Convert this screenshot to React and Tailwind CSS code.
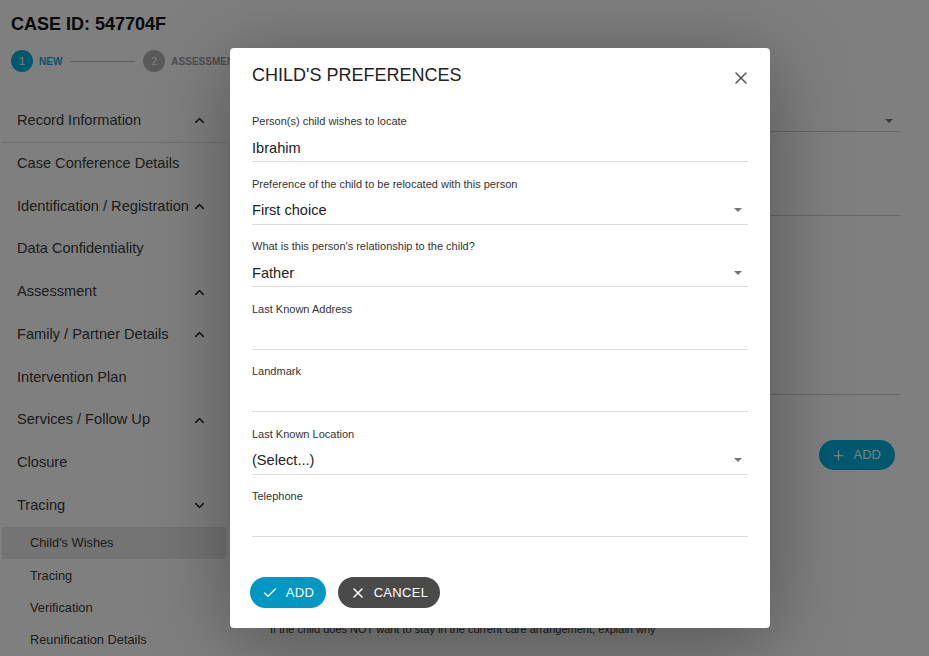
import React from 'react';
import { Check, X, ChevronUp, ChevronDown, Plus } from 'lucide-react';

const sections = [
  { label: 'Record Information', chevron: 'up', divider: true },
  { label: 'Case Conference Details' },
  { label: 'Identification / Registration', chevron: 'up' },
  { label: 'Data Confidentiality' },
  { label: 'Assessment', chevron: 'up' },
  { label: 'Family / Partner Details', chevron: 'up' },
  { label: 'Intervention Plan' },
  { label: 'Services / Follow Up', chevron: 'up' },
  { label: 'Closure' },
  { label: 'Tracing', chevron: 'down' },
];

const subItems = ["Child's Wishes", 'Tracing', 'Verification', 'Reunification Details'];

const fields = [
  { label: 'Person(s) child wishes to locate', value: 'Ibrahim' },
  { label: 'Preference of the child to be relocated with this person', value: 'First choice', select: true },
  { label: "What is this person's relationship to the child?", value: 'Father', select: true },
  { label: 'Last Known Address' },
  { label: 'Landmark' },
  { label: 'Last Known Location', value: '(Select...)', select: true },
  { label: 'Telephone' },
];

const Caret = () => (
  <span className="block h-0 w-0 border-x-[4.5px] border-t-[4.5px] border-x-transparent border-t-[#757575]" />
);

const Step = ({ n, label, active }) => (
  <div className="flex items-center gap-[6px]">
    <span
      className={`flex h-[22px] w-[22px] items-center justify-center rounded-full text-[11px] text-white ${
        active ? 'bg-[#00b0de]' : 'bg-[#b4b4b4]'
      }`}
    >
      {n}
    </span>
    <span className={`text-[10px] font-bold ${active ? 'text-[#00b0de]' : 'text-[#9a9a9a]'}`}>{label}</span>
  </div>
);

const Sidebar = () => (
  <nav className="w-[226px] shrink-0 pl-[2px] pt-[7px]">
    {sections.map((s) => (
      <div
        key={s.label}
        className={`flex h-[42.7px] items-center justify-between whitespace-nowrap pl-[15px] pr-[19px] text-[14.6px] text-[#383838] ${
          s.divider ? 'border-b border-[#e0e0e0]' : ''
        }`}
      >
        <span>{s.label}</span>
        {s.chevron === 'up' && <ChevronUp size={15} strokeWidth={2.6} className="shrink-0 text-[#383838]" />}
        {s.chevron === 'down' && <ChevronDown size={15} strokeWidth={2.6} className="shrink-0 text-[#383838]" />}
      </div>
    ))}
    <div>
      {subItems.map((item, i) => (
        <div
          key={item}
          className={`flex h-[32.3px] items-center pl-[28px] text-[12.8px] text-[#383838] ${
            i === 0 ? 'bg-[#e8e8e8]' : ''
          }`}
        >
          {item}
        </div>
      ))}
    </div>
  </nav>
);

const MainContent = () => (
  <main className="flex-1 pl-[44px] pr-[29px] pt-[9px]">
    <div className="flex h-[30px] items-end justify-end border-b border-[#cfcfcf] pb-[8px] pr-[7px]">
      <Caret />
    </div>
    <div className="h-[84px] border-b border-[#cfcfcf]" />
    <div className="h-[179px] border-b border-[#cfcfcf]" />
    <div className="flex justify-end pt-[45px] pr-[5px]">
      <button className="flex h-[30px] items-center gap-[8px] rounded-full bg-[#00b0de] pl-[12px] pr-[14px] text-[13px] text-white">
        <Plus size={15} strokeWidth={2} />
        ADD
      </button>
    </div>
    <p className="pt-[152px] text-[11px] leading-[14px] text-[#333]">
      If the child does NOT want to stay in the current care arrangement, explain why
    </p>
  </main>
);

const Field = ({ label, value, select }) => (
  <div>
    <div className="text-[11px] leading-[14px] text-[#333]">{label}</div>
    <div className="flex h-[34px] items-center justify-between border-b border-[#dcdcdc] pt-[6px]">
      <span className="text-[14.6px] leading-[20px] text-[#222]">{value}</span>
      {select && (
        <span className="flex items-center pr-[6px]">
          <Caret />
        </span>
      )}
    </div>
  </div>
);

const Modal = () => (
  <div className="absolute left-[230px] top-[48px] h-[580px] w-[540px] rounded-[4px] bg-white px-[22px] pt-[15px] shadow-[0_12px_80px_rgba(0,0,0,0.35)]">
    <div className="flex h-[24px] items-center justify-between">
      <h2 className="text-[18px] text-[#222]">CHILD'S PREFERENCES</h2>
      <X size={20} strokeWidth={1.8} className="mr-[-3px] mt-[6px] text-[#555]" />
    </div>
    <div className="mt-[27px] flex flex-col gap-[14.5px]">
      {fields.map((f) => (
        <Field key={f.label} {...f} />
      ))}
    </div>
    <div className="mt-[40px] flex gap-[12px]">
      <button className="-ml-[2px] flex h-[31px] w-[76px] items-center justify-center gap-[8px] rounded-full bg-[#0097c2] text-[13px] tracking-wide text-white">
        <Check size={16} strokeWidth={2} />
        ADD
      </button>
      <button className="flex h-[31px] w-[102px] items-center justify-center gap-[8px] rounded-full bg-[#4a4a4a] text-[13px] tracking-wide text-white">
        <X size={16} strokeWidth={2.2} />
        CANCEL
      </button>
    </div>
  </div>
);

export default function App() {
  return (
    <div className="relative h-[656px] w-[929px] overflow-hidden bg-white font-['Liberation_Sans',Arial,sans-serif]">
      <header className="pl-[11px] pt-[13px]">
        <h1 className="text-[18px] font-bold leading-[22px] text-[#111]">CASE ID: 547704F</h1>
        <div className="mt-[15px] flex items-center">
          <Step n="1" label="NEW" active />
          <span className="mx-[8px] h-px w-[65px] bg-[#bdbdbd]" />
          <Step n="2" label="ASSESSMENT" />
        </div>
      </header>
      <div className="flex pt-[21px]">
        <Sidebar />
        <MainContent />
      </div>
      <div className="absolute inset-0 bg-black/50">
        <Modal />
      </div>
    </div>
  );
}
